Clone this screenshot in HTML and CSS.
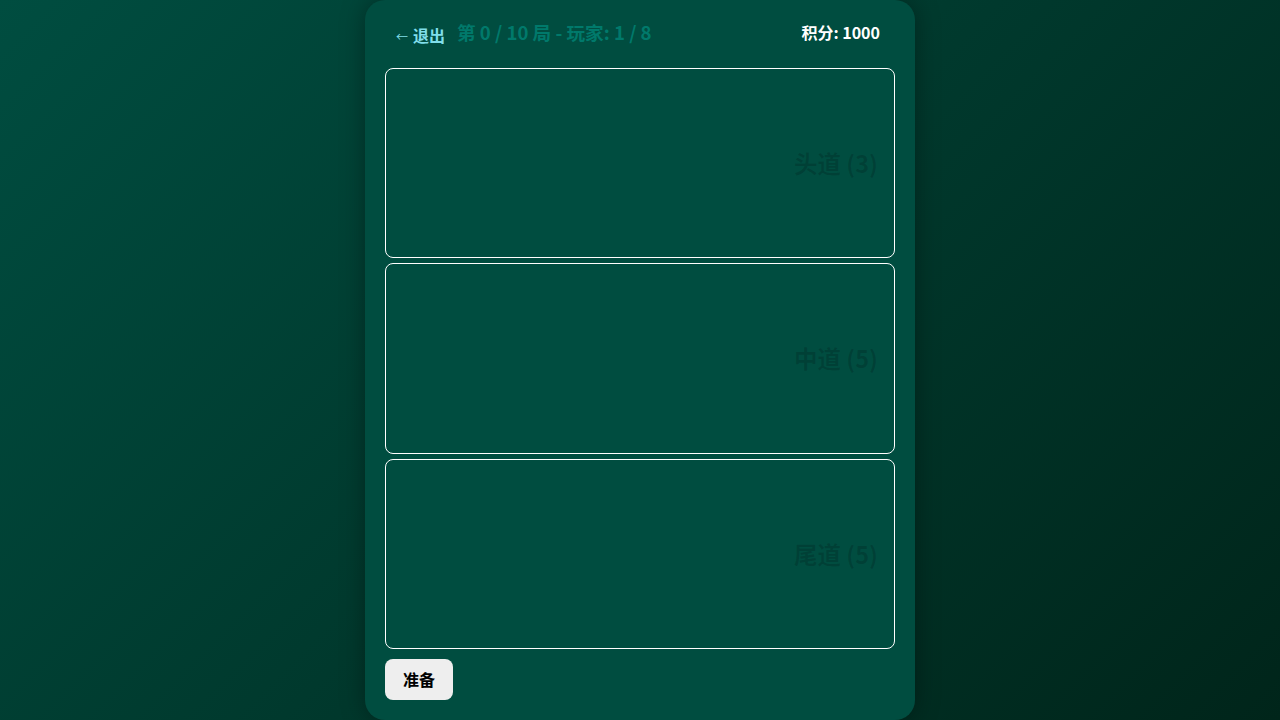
FILE: index.html
```html
<!DOCTYPE html>
<html lang="zh">
<head>
<meta charset="utf-8">
<title>十三水</title>
<link rel="stylesheet" href="styles.css">
</head>
<body>
<div class="page">
  <div class="panel">
    <div class="header">
      <div class="header-left">
        <button class="exit"><span class="arrow">←</span>退出</button>
        <span class="title">第 0 / 10 局 - 玩家: 1 / 8</span>
      </div>
      <div class="score">积分: 1000</div>
    </div>
    <div class="rows">
      <div class="row"><span class="row-label">头道 (3)</span></div>
      <div class="row"><span class="row-label">中道 (5)</span></div>
      <div class="row"><span class="row-label">尾道 (5)</span></div>
    </div>
    <div class="actions">
      <button class="ready">准备</button>
    </div>
  </div>
</div>
</body>
</html>
```

FILE: styles.css
```css
html, body {
  margin: 0;
  padding: 0;
  height: 100%;
}
body {
  background: linear-gradient(135deg, #004d40 0%, #00251a 100%);
  font-family: "Noto Sans CJK SC", "Noto Sans", sans-serif;
  color: #fff;
  overflow: hidden;
}
.page {
  display: flex;
  justify-content: center;
  height: 720px;
}
.panel {
  width: 550px;
  box-sizing: border-box;
  height: 720px;
  background: #004d40;
  border-radius: 20px;
  padding: 20px;
  box-shadow: 0 0 24px rgba(0, 0, 0, 0.35);
  display: flex;
  flex-direction: column;
}
.header {
  height: 23px;
  margin-bottom: 25px;
  display: flex;
  align-items: center;
  justify-content: space-between;
  padding: 0 15px 0 11px;
}
.header-left {
  display: flex;
  align-items: center;
  gap: 12px;
}
.exit {
  background: none;
  border: none;
  color: #80deea;
  font-family: inherit;
  font-weight: 700;
  font-size: 16px;
  padding: 0;
  margin-top: 6px;
  cursor: pointer;
}
.exit .arrow {
  font-weight: 400;
  font-size: 12px;
  margin-right: 5px;
}
.title {
  color: #00796b;
  font-size: 18.6px;
  font-weight: 700;
}
.score {
  font-size: 16px;
  font-weight: 700;
  color: #fff;
}
.rows {
  display: flex;
  flex-direction: column;
  gap: 5px;
}
.row {
  height: 190.33px;
  box-sizing: border-box;
  border: 1px solid #fff;
  border-radius: 8px;
  display: flex;
  align-items: center;
  justify-content: flex-end;
  padding-right: 16px;
}
.row-label {
  font-size: 23.5px;
  font-weight: 700;
  color: rgba(0, 0, 0, 0.16);
}
.actions {
  margin-top: 10px;
  display: flex;
}
.ready {
  background: #eeeeee;
  color: #000;
  border: none;
  border-radius: 8px;
  font-family: inherit;
  font-weight: 700;
  font-size: 16px;
  height: 41px;
  padding: 0 18px;
  cursor: pointer;
}
```
